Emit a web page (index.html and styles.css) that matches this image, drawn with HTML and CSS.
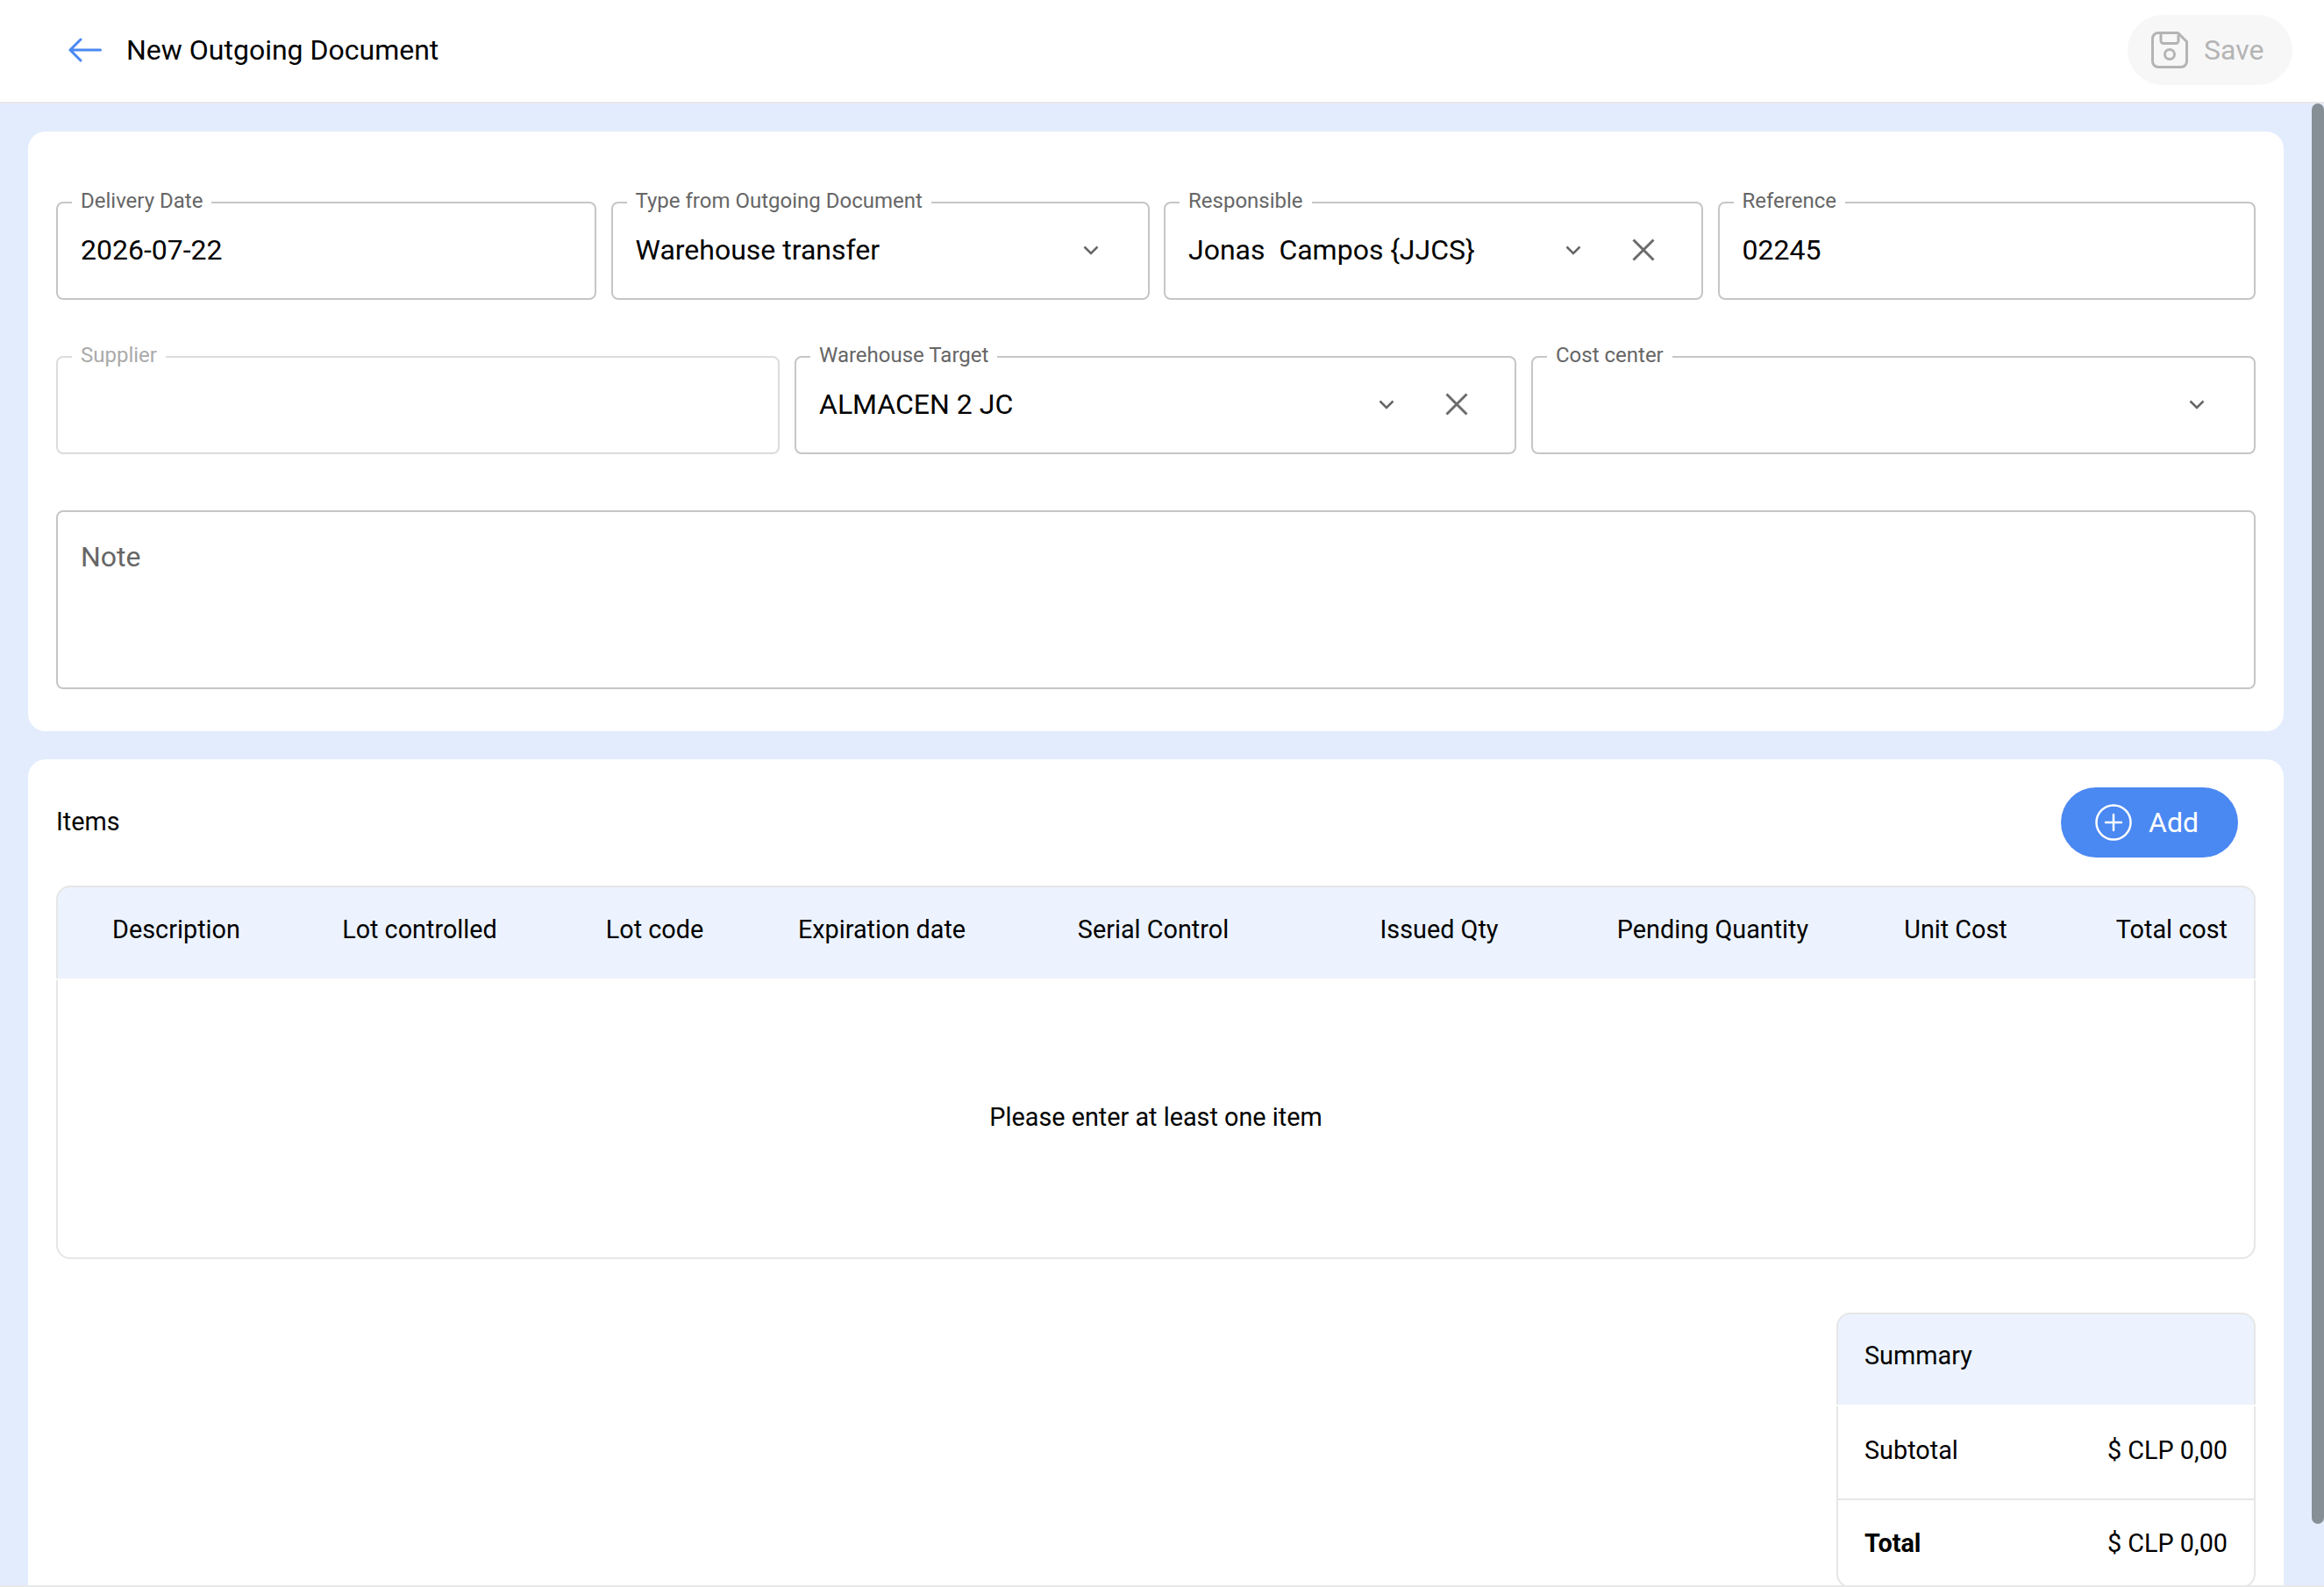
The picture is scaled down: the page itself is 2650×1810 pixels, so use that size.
FILE: index.html
```html
<!DOCTYPE html>
<html lang="en">
<head>
    <meta charset="UTF-8">
    <meta name="viewport" content="width=device-width, initial-scale=1.0">
    <title>New Outgoing Document</title>
    <link rel="stylesheet" href="styles.css">
</head>
<body>
    <div class="app">
        <header class="topbar">
            <div class="topbar-left">
                <svg class="back-icon" viewBox="0 0 38 28" fill="none" stroke="#4a88f2" stroke-width="3" stroke-linecap="round" stroke-linejoin="round">
                    <path d="M36.5 14H2M14 2L2 14l12 12"/>
                </svg>
                <span class="page-title">New Outgoing Document</span>
            </div>
            <button class="btn btn-save" type="button">
                <svg class="btn-icon" viewBox="0 0 42 42" fill="none" stroke="#b4b4b4" stroke-width="3" stroke-linejoin="round">
                    <path d="M8 1.500h22.500l10 10V34a6.500 6.500 0 0 1-6.500 6.500H8A6.500 6.500 0 0 1 1.500 34V8A6.500 6.500 0 0 1 8 1.500z"/>
                    <path d="M11 1.500v9a3 3 0 0 0 3 3h14a3 3 0 0 0 3-3v-7"/>
                    <circle cx="21" cy="26" r="5.500"/>
                </svg>
                <span>Save</span>
            </button>
        </header>

        <main class="content">
            <section class="card card-form">
                <div class="form-row form-row-4">
                    <fieldset class="field">
                        <legend>Delivery Date</legend>
                        <div class="field-body"><span class="field-value">2026-07-22</span></div>
                    </fieldset>
                    <fieldset class="field">
                        <legend>Type from Outgoing Document</legend>
                        <div class="field-body">
                            <span class="field-value">Warehouse transfer</span>
                            <svg class="chevron" viewBox="0 0 18 11" fill="none"><path d="M1.500 1.500L9 9l7.500-7.500"/></svg>
                        </div>
                    </fieldset>
                    <fieldset class="field">
                        <legend>Responsible</legend>
                        <div class="field-body">
                            <span class="field-value">Jonas&nbsp; Campos {JJCS}</span>
                            <svg class="chevron" viewBox="0 0 18 11" fill="none"><path d="M1.500 1.500L9 9l7.500-7.500"/></svg>
                            <svg class="clear" viewBox="0 0 26 26" fill="none"><path d="M1.500 1.500l23 23M24.500 1.500l-23 23"/></svg>
                        </div>
                    </fieldset>
                    <fieldset class="field">
                        <legend>Reference</legend>
                        <div class="field-body"><span class="field-value">02245</span></div>
                    </fieldset>
                </div>

                <div class="form-row form-row-3">
                    <fieldset class="field field-disabled">
                        <legend>Supplier</legend>
                        <div class="field-body"></div>
                    </fieldset>
                    <fieldset class="field">
                        <legend>Warehouse Target</legend>
                        <div class="field-body">
                            <span class="field-value">ALMACEN 2 JC</span>
                            <svg class="chevron" viewBox="0 0 18 11" fill="none"><path d="M1.500 1.500L9 9l7.500-7.500"/></svg>
                            <svg class="clear" viewBox="0 0 26 26" fill="none"><path d="M1.500 1.500l23 23M24.500 1.500l-23 23"/></svg>
                        </div>
                    </fieldset>
                    <fieldset class="field">
                        <legend>Cost center</legend>
                        <div class="field-body">
                            <span class="field-value"></span>
                            <svg class="chevron" viewBox="0 0 18 11" fill="none"><path d="M1.500 1.500L9 9l7.500-7.500"/></svg>
                        </div>
                    </fieldset>
                </div>

                <div class="note">Note</div>
            </section>

            <section class="card card-items">
                <div class="items-head">
                    <span class="items-title">Items</span>
                    <button class="btn btn-add" type="button">
                        <svg class="btn-icon" viewBox="0 0 42 42" fill="none" stroke="#fff" stroke-width="2.500" stroke-linecap="round">
                            <circle cx="21" cy="21" r="19.500"/>
                            <path d="M21 12v18M12 21h18"/>
                        </svg>
                        <span>Add</span>
                    </button>
                </div>

                <div class="table-head">
                    <span>Description</span>
                    <span>Lot controlled</span>
                    <span>Lot code</span>
                    <span>Expiration date</span>
                    <span>Serial Control</span>
                    <span>Issued Qty</span>
                    <span>Pending Quantity</span>
                    <span>Unit Cost</span>
                    <span class="col-total">Total cost</span>
                </div>
                <div class="table-empty">Please enter at least one item</div>

                <div class="summary">
                    <div class="summary-head">Summary</div>
                    <div class="summary-row summary-sub">
                        <span>Subtotal</span>
                        <span>$ CLP 0,00</span>
                    </div>
                    <div class="summary-row summary-total">
                        <span class="summary-strong">Total</span>
                        <span>$ CLP 0,00</span>
                    </div>
                </div>
            </section>

            <div class="scroll-thumb"></div>
        </main>
    </div>
</body>
</html>
```

FILE: styles.css
```css
* {
    box-sizing: border-box;
}
body {
    margin: 0;
    font-family: Roboto, 'Liberation Sans', sans-serif;
    color: #000;
    overflow: hidden;
}
.app {
    display: flex;
    flex-direction: column;
    height: 1810px;
    background: #e2ecfd;
    border-bottom: 2px solid #e8e8e8;
}
.topbar {
    display: flex;
    align-items: center;
    justify-content: space-between;
    flex: 0 0 118px;
    padding: 0 36px 2px 78px;
    background: #fff;
    border-bottom: 2px solid #e8e8e8;
}
.topbar-left {
    display: flex;
    align-items: center;
    gap: 28px;
}
.back-icon {
    width: 38px;
    height: 28px;
}
.page-title {
    font-size: 32px;
}
.btn {
    display: flex;
    align-items: center;
    height: 80px;
    border: none;
    border-radius: 40px;
    font-family: inherit;
    font-size: 32px;
}
.btn-icon {
    width: 42px;
    height: 42px;
}
.btn-save {
    gap: 18px;
    width: 188px;
    padding: 0 0 0 27px;
    background: #f7f7f7;
    color: #b4b4b4;
}
.btn-add {
    gap: 19px;
    width: 202px;
    padding: 0 0 0 39px;
    margin-right: 20px;
    background: #4a88f2;
    color: #fff;
}
.content {
    position: relative;
    flex: 1;
    overflow: hidden;
    padding: 32px 46px 0 32px;
}
.card {
    padding: 0 32px;
    background: #fff;
    border-radius: 20px;
}
.card-form {
    padding-top: 68px;
    padding-bottom: 48px;
}
.card-items {
    margin-top: 32px;
    padding-top: 32px;
    padding-bottom: 40px;
}
.form-row {
    display: grid;
    margin-bottom: 52px;
}
.form-row-4 {
    grid-template-columns: 616px 614px 615px 1fr;
    column-gap: 16.500px;
}
.form-row-3 {
    grid-template-columns: 825px 823px 1fr;
    column-gap: 17px;
    margin-bottom: 64px;
}
.field {
    height: 124px;
    min-width: 0;
    margin: 0;
    padding: 0 28px 0 26px;
    border: 2px solid #c6c6c6;
    border-radius: 8px;
}
.field legend {
    height: 26px;
    margin-left: -10px;
    padding: 0 10px;
    font-size: 24px;
    line-height: 22px;
    color: #666;
}
.field-body {
    display: flex;
    align-items: center;
    height: 92px;
    padding-bottom: 10px;
}
.field-value {
    flex: 1;
    font-size: 32px;
    white-space: nowrap;
}
.field-disabled {
    border-color: #dcdcdc;
}
.field-disabled legend {
    color: #aaa;
}
.chevron {
    flex: none;
    width: 18px;
    height: 11px;
    margin-right: 28px;
    stroke: #666;
    stroke-width: 2.500;
}
.clear {
    flex: none;
    width: 26px;
    height: 26px;
    margin-left: 30px;
    margin-right: 25px;
    stroke: #6b6b6b;
    stroke-width: 3;
}
.note {
    height: 204px;
    padding: 32px 26px;
    border: 2px solid #c6c6c6;
    border-radius: 8px;
    font-size: 32px;
    line-height: 38px;
    color: #666;
}
.items-head {
    display: flex;
    align-items: center;
    justify-content: space-between;
    margin-bottom: 32px;
}
.items-title {
    margin-top: -3px;
    font-size: 28.800px;
}
.table-head {
    display: grid;
    grid-template-columns: 270px 285px 251px 267px 352px 300px 324px 230px 1fr;
    align-items: center;
    height: 106px;
    padding-bottom: 8px;
    background: #ecf3fe;
    border: 2px solid #e6e6e6;
    border-bottom: none;
    border-radius: 16px 16px 0 0;
    font-size: 28.800px;
    text-align: center;
}
.col-total {
    padding-right: 30px;
    text-align: right;
    white-space: nowrap;
}
.table-empty {
    display: flex;
    align-items: center;
    justify-content: center;
    height: 318px;
    margin-top: 2px;
    padding-bottom: 4px;
    border: 2px solid #e6e6e6;
    border-top: none;
    border-radius: 0 0 16px 16px;
    font-size: 28.800px;
}
.summary {
    width: 478px;
    margin: 61px 0 0 auto;
    font-size: 28.800px;
}
.summary-head {
    display: flex;
    align-items: center;
    height: 105px;
    padding: 0 30px 10px;
    background: #ecf3fe;
    border: 2px solid #e6e6e6;
    border-bottom: none;
    border-radius: 16px 16px 0 0;
}
.summary-row {
    display: flex;
    align-items: center;
    justify-content: space-between;
    padding: 0 30px;
    border: 2px solid #e6e6e6;
    border-top: none;
}
.summary-sub {
    height: 107px;
    margin-top: 2px;
    padding-bottom: 6px;
}
.summary-total {
    height: 100px;
    border-radius: 0 0 16px 16px;
}
.summary-strong {
    font-weight: 700;
}
.scroll-thumb {
    position: absolute;
    top: 0;
    right: 0;
    width: 14px;
    height: 1620px;
    background: #868e96;
    border-radius: 7px;
}
```
